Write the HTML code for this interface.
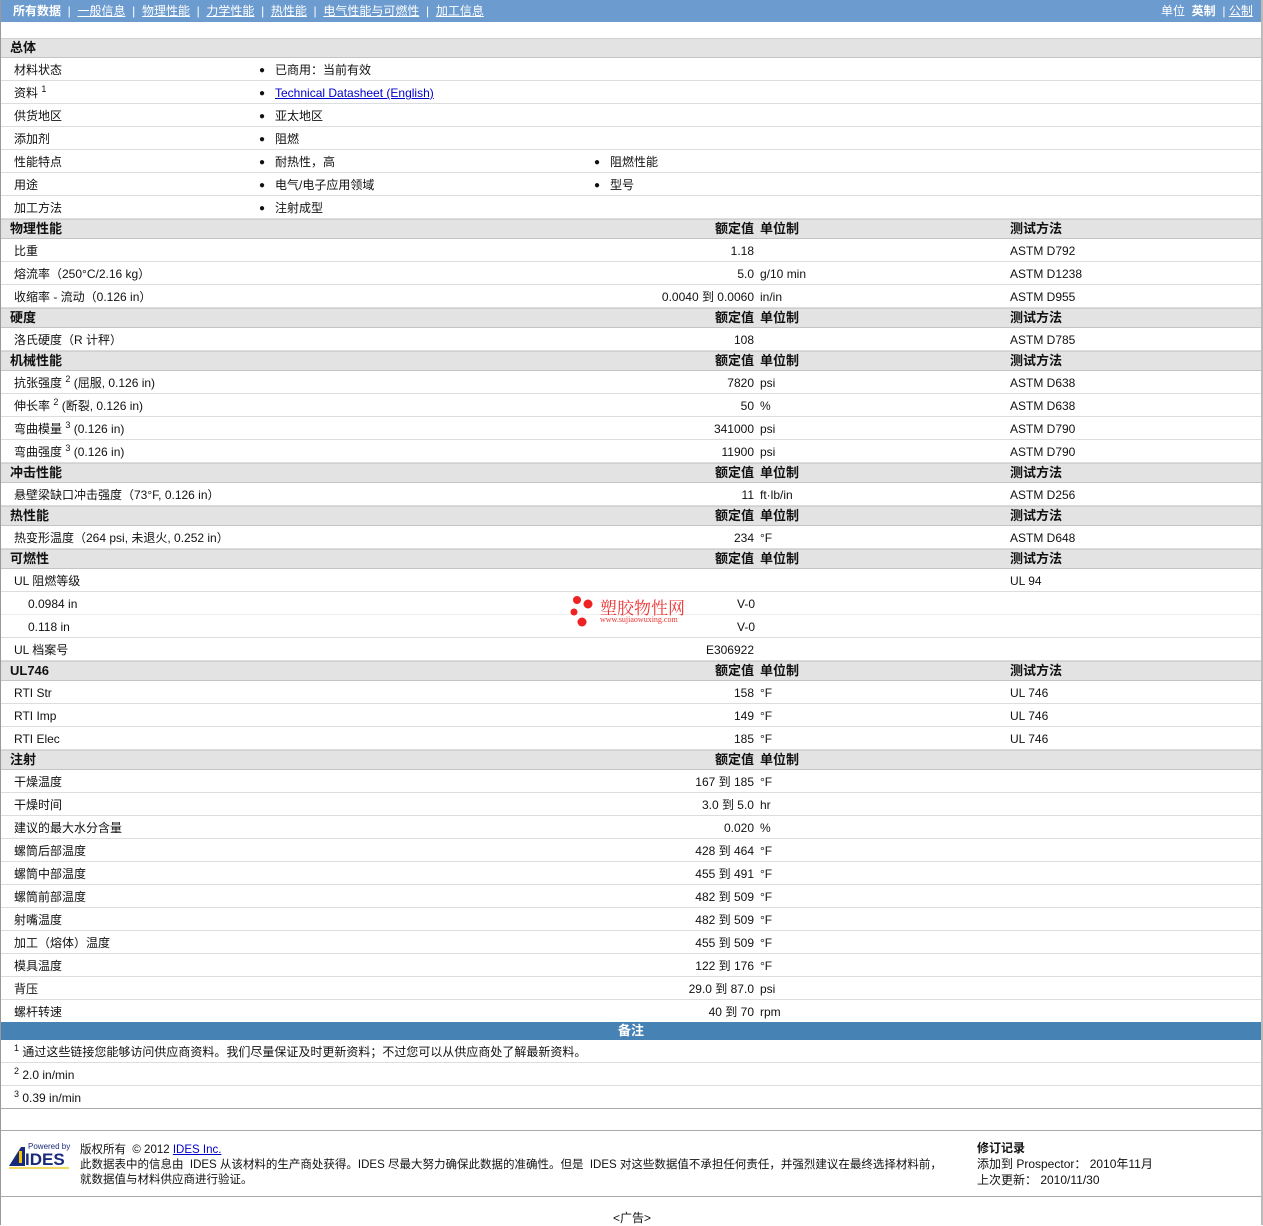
<!DOCTYPE html>
<html><head><meta charset="utf-8"><style>
*{margin:0;padding:0;box-sizing:border-box}
body{width:1263px;height:1225px;background:#fff;font-family:"Liberation Sans","Noto Sans CJK SC",sans-serif;font-size:12px;color:#111;overflow:hidden}
#w{position:relative;width:1263px;height:1225px;border-left:1px solid #999;border-right:2px solid #bbb}
.top{height:22px;background:#6b9bcf;color:#fff;position:relative;font-size:12px}
.top span{position:absolute;top:3px;line-height:16px}
.top a{color:#fff;text-decoration:underline}
.r{position:relative;height:23px;border-bottom:1px solid #ddd}
.h{position:relative;height:20px;background:#e3e3e3;border-bottom:1px solid #c4c4c4;border-top:1px solid #d0d0d0;font-weight:bold;font-size:13px}
.r span,.h span{position:absolute;white-space:nowrap;line-height:15px;height:15px}
.r span{top:5px}
.h span{top:1px}
.l{left:13px}.hl{left:9px}
.v{right:507px;text-align:right}
.u{left:759px}.m{left:1009px}
.b1{left:258px}.t1{left:274px}.b2{left:593px}.t2{left:609px}
.b1,.b2{font-size:10px}
sup{font-size:9px;vertical-align:5px;line-height:0}
a{color:#00c}
.note{position:relative;height:18px;background:#4682b4;color:#fff;font-weight:bold;font-size:13px;text-align:center;line-height:18px}
</style></head><body><div id="w">
<div class="top">
<span style="left:12px"><b>所有数据</b> &nbsp;| &nbsp;<a>一般信息</a> &nbsp;| &nbsp;<a>物理性能</a> &nbsp;| &nbsp;<a>力学性能</a> &nbsp;| &nbsp;<a>热性能</a> &nbsp;| &nbsp;<a>电气性能与可燃性</a> &nbsp;| &nbsp;<a>加工信息</a></span>
<span style="left:1160px">单位 &nbsp;<b>英制</b> &nbsp;| <a>公制</a></span>
</div>
<div style="height:16px"></div>
<div class="h"><span class="hl">总体</span></div>
<div class="r"><span class="l">材料状态</span><span class="b1">●</span><span class="t1">已商用：当前有效</span></div>
<div class="r"><span class="l">资料 <sup>1</sup></span><span class="b1">●</span><span class="t1"><a style="text-decoration:underline">Technical Datasheet (English)</a></span></div>
<div class="r"><span class="l">供货地区</span><span class="b1">●</span><span class="t1">亚太地区</span></div>
<div class="r"><span class="l">添加剂</span><span class="b1">●</span><span class="t1">阻燃</span></div>
<div class="r"><span class="l">性能特点</span><span class="b1">●</span><span class="t1">耐热性，高</span><span class="b2">●</span><span class="t2">阻燃性能</span></div>
<div class="r"><span class="l">用途</span><span class="b1">●</span><span class="t1">电气/电子应用领域</span><span class="b2">●</span><span class="t2">型号</span></div>
<div class="r"><span class="l">加工方法</span><span class="b1">●</span><span class="t1">注射成型</span></div>
<div class="h"><span class="hl">物理性能</span><span class="v">额定值</span><span class="u">单位制</span><span class="m">测试方法</span></div>
<div class="r"><span class="l">比重</span><span class="v">1.18</span><span class="m">ASTM D792</span></div>
<div class="r"><span class="l">熔流率（250°C/2.16 kg）</span><span class="v">5.0</span><span class="u">g/10 min</span><span class="m">ASTM D1238</span></div>
<div class="r"><span class="l">收缩率 - 流动（0.126 in）</span><span class="v">0.0040 到 0.0060</span><span class="u">in/in</span><span class="m">ASTM D955</span></div>
<div class="h"><span class="hl">硬度</span><span class="v">额定值</span><span class="u">单位制</span><span class="m">测试方法</span></div>
<div class="r"><span class="l">洛氏硬度（R 计秤）</span><span class="v">108</span><span class="m">ASTM D785</span></div>
<div class="h"><span class="hl">机械性能</span><span class="v">额定值</span><span class="u">单位制</span><span class="m">测试方法</span></div>
<div class="r"><span class="l">抗张强度 <sup>2</sup> (屈服, 0.126 in)</span><span class="v">7820</span><span class="u">psi</span><span class="m">ASTM D638</span></div>
<div class="r"><span class="l">伸长率 <sup>2</sup> (断裂, 0.126 in)</span><span class="v">50</span><span class="u">%</span><span class="m">ASTM D638</span></div>
<div class="r"><span class="l">弯曲模量 <sup>3</sup> (0.126 in)</span><span class="v">341000</span><span class="u">psi</span><span class="m">ASTM D790</span></div>
<div class="r"><span class="l">弯曲强度 <sup>3</sup> (0.126 in)</span><span class="v">11900</span><span class="u">psi</span><span class="m">ASTM D790</span></div>
<div class="h"><span class="hl">冲击性能</span><span class="v">额定值</span><span class="u">单位制</span><span class="m">测试方法</span></div>
<div class="r"><span class="l">悬壁梁缺口冲击强度（73°F, 0.126 in）</span><span class="v">11</span><span class="u">ft·lb/in</span><span class="m">ASTM D256</span></div>
<div class="h"><span class="hl">热性能</span><span class="v">额定值</span><span class="u">单位制</span><span class="m">测试方法</span></div>
<div class="r"><span class="l">热变形温度（264 psi, 未退火, 0.252 in）</span><span class="v">234</span><span class="u">°F</span><span class="m">ASTM D648</span></div>
<div class="h"><span class="hl">可燃性</span><span class="v">额定值</span><span class="u">单位制</span><span class="m">测试方法</span></div>
<div class="r"><span class="l">UL 阻燃等级</span><span class="m">UL 94</span></div>
<div class="r" style="border-bottom-color:#eee"><span style="left:27px">0.0984 in</span><span style="left:736px">V-0</span>
<svg style="position:absolute;left:568px;top:3px" width="30" height="34"><circle cx="8" cy="5" r="4" fill="#e22"/><circle cx="19" cy="9" r="4.5" fill="#e22"/><circle cx="5" cy="17" r="3.5" fill="#e22"/><circle cx="13" cy="27" r="4.5" fill="#e22"/></svg>
<span style="left:599px;top:5px;height:20px;line-height:20px;color:#e33;font-size:17px;font-family:'Noto Serif CJK SC',serif">塑胶物性网</span></div>
<div class="r"><span style="left:599px;top:0px;line-height:9px;color:#e33;font-size:8px;font-family:'Liberation Serif',serif">www.sujiaowuxing.com</span><span style="left:27px">0.118 in</span><span style="left:736px">V-0</span></div>
<div class="r"><span class="l">UL 档案号</span><span class="v">E306922</span></div>
<div class="h"><span class="hl">UL746</span><span class="v">额定值</span><span class="u">单位制</span><span class="m">测试方法</span></div>
<div class="r"><span class="l">RTI Str</span><span class="v">158</span><span class="u">°F</span><span class="m">UL 746</span></div>
<div class="r"><span class="l">RTI Imp</span><span class="v">149</span><span class="u">°F</span><span class="m">UL 746</span></div>
<div class="r"><span class="l">RTI Elec</span><span class="v">185</span><span class="u">°F</span><span class="m">UL 746</span></div>
<div class="h"><span class="hl">注射</span><span class="v">额定值</span><span class="u">单位制</span></div>
<div class="r"><span class="l">干燥温度</span><span class="v">167 到 185</span><span class="u">°F</span></div>
<div class="r"><span class="l">干燥时间</span><span class="v">3.0 到 5.0</span><span class="u">hr</span></div>
<div class="r"><span class="l">建议的最大水分含量</span><span class="v">0.020</span><span class="u">%</span></div>
<div class="r"><span class="l">螺筒后部温度</span><span class="v">428 到 464</span><span class="u">°F</span></div>
<div class="r"><span class="l">螺筒中部温度</span><span class="v">455 到 491</span><span class="u">°F</span></div>
<div class="r"><span class="l">螺筒前部温度</span><span class="v">482 到 509</span><span class="u">°F</span></div>
<div class="r"><span class="l">射嘴温度</span><span class="v">482 到 509</span><span class="u">°F</span></div>
<div class="r"><span class="l">加工（熔体）温度</span><span class="v">455 到 509</span><span class="u">°F</span></div>
<div class="r"><span class="l">模具温度</span><span class="v">122 到 176</span><span class="u">°F</span></div>
<div class="r"><span class="l">背压</span><span class="v">29.0 到 87.0</span><span class="u">psi</span></div>
<div class="r" style="height:22px;border:0"><span class="l">螺杆转速</span><span class="v">40 到 70</span><span class="u">rpm</span></div>
<div class="note">备注</div>
<div class="r"><span class="l"><sup>1</sup> 通过这些链接您能够访问供应商资料。我们尽量保证及时更新资料；不过您可以从供应商处了解最新资料。</span></div>
<div class="r"><span class="l"><sup>2</sup> 2.0 in/min</span></div>
<div class="r" style="border-bottom-color:#aaa"><span class="l"><sup>3</sup> 0.39 in/min</span></div>
<div style="height:22px;border-bottom:1px solid #aaa"></div>
<div style="position:relative;height:66px;border-bottom:1px solid #aaa">
<svg style="position:absolute;left:6px;top:10px" width="64" height="28"><path d="M2 25 L14 6 L18 6 L18 25 Z" fill="#1a2a7a"/><rect x="12" y="10" width="3" height="12" fill="#f5c400"/><text x="21" y="8" font-size="8" fill="#1a2a7a" font-family="Liberation Sans">Powered by</text><text x="18" y="24" font-size="17" font-weight="bold" fill="#1a2a7a" font-family="Liberation Sans">IDES</text><rect x="2" y="26" width="60" height="2" fill="#f5d860"/></svg>
<div style="position:absolute;left:79px;top:12px;line-height:15px;font-size:11.5px;white-space:nowrap">版权所有 &nbsp;© 2012 <a style="text-decoration:underline">IDES Inc.</a><br>此数据表中的信息由 &nbsp;IDES 从该材料的生产商处获得。IDES 尽最大努力确保此数据的准确性。但是 &nbsp;IDES 对这些数据值不承担任何责任，并强烈建议在最终选择材料前，<br>就数据值与材料供应商进行验证。</div>
<div style="position:absolute;left:976px;top:9px;line-height:16px"><b>修订记录</b><br>添加到 Prospector： 2010年11月<br>上次更新： 2010/11/30</div>
</div>
<div style="text-align:center;padding-top:12px;padding-left:2px">&lt;广告&gt;</div>
</div></body></html>
